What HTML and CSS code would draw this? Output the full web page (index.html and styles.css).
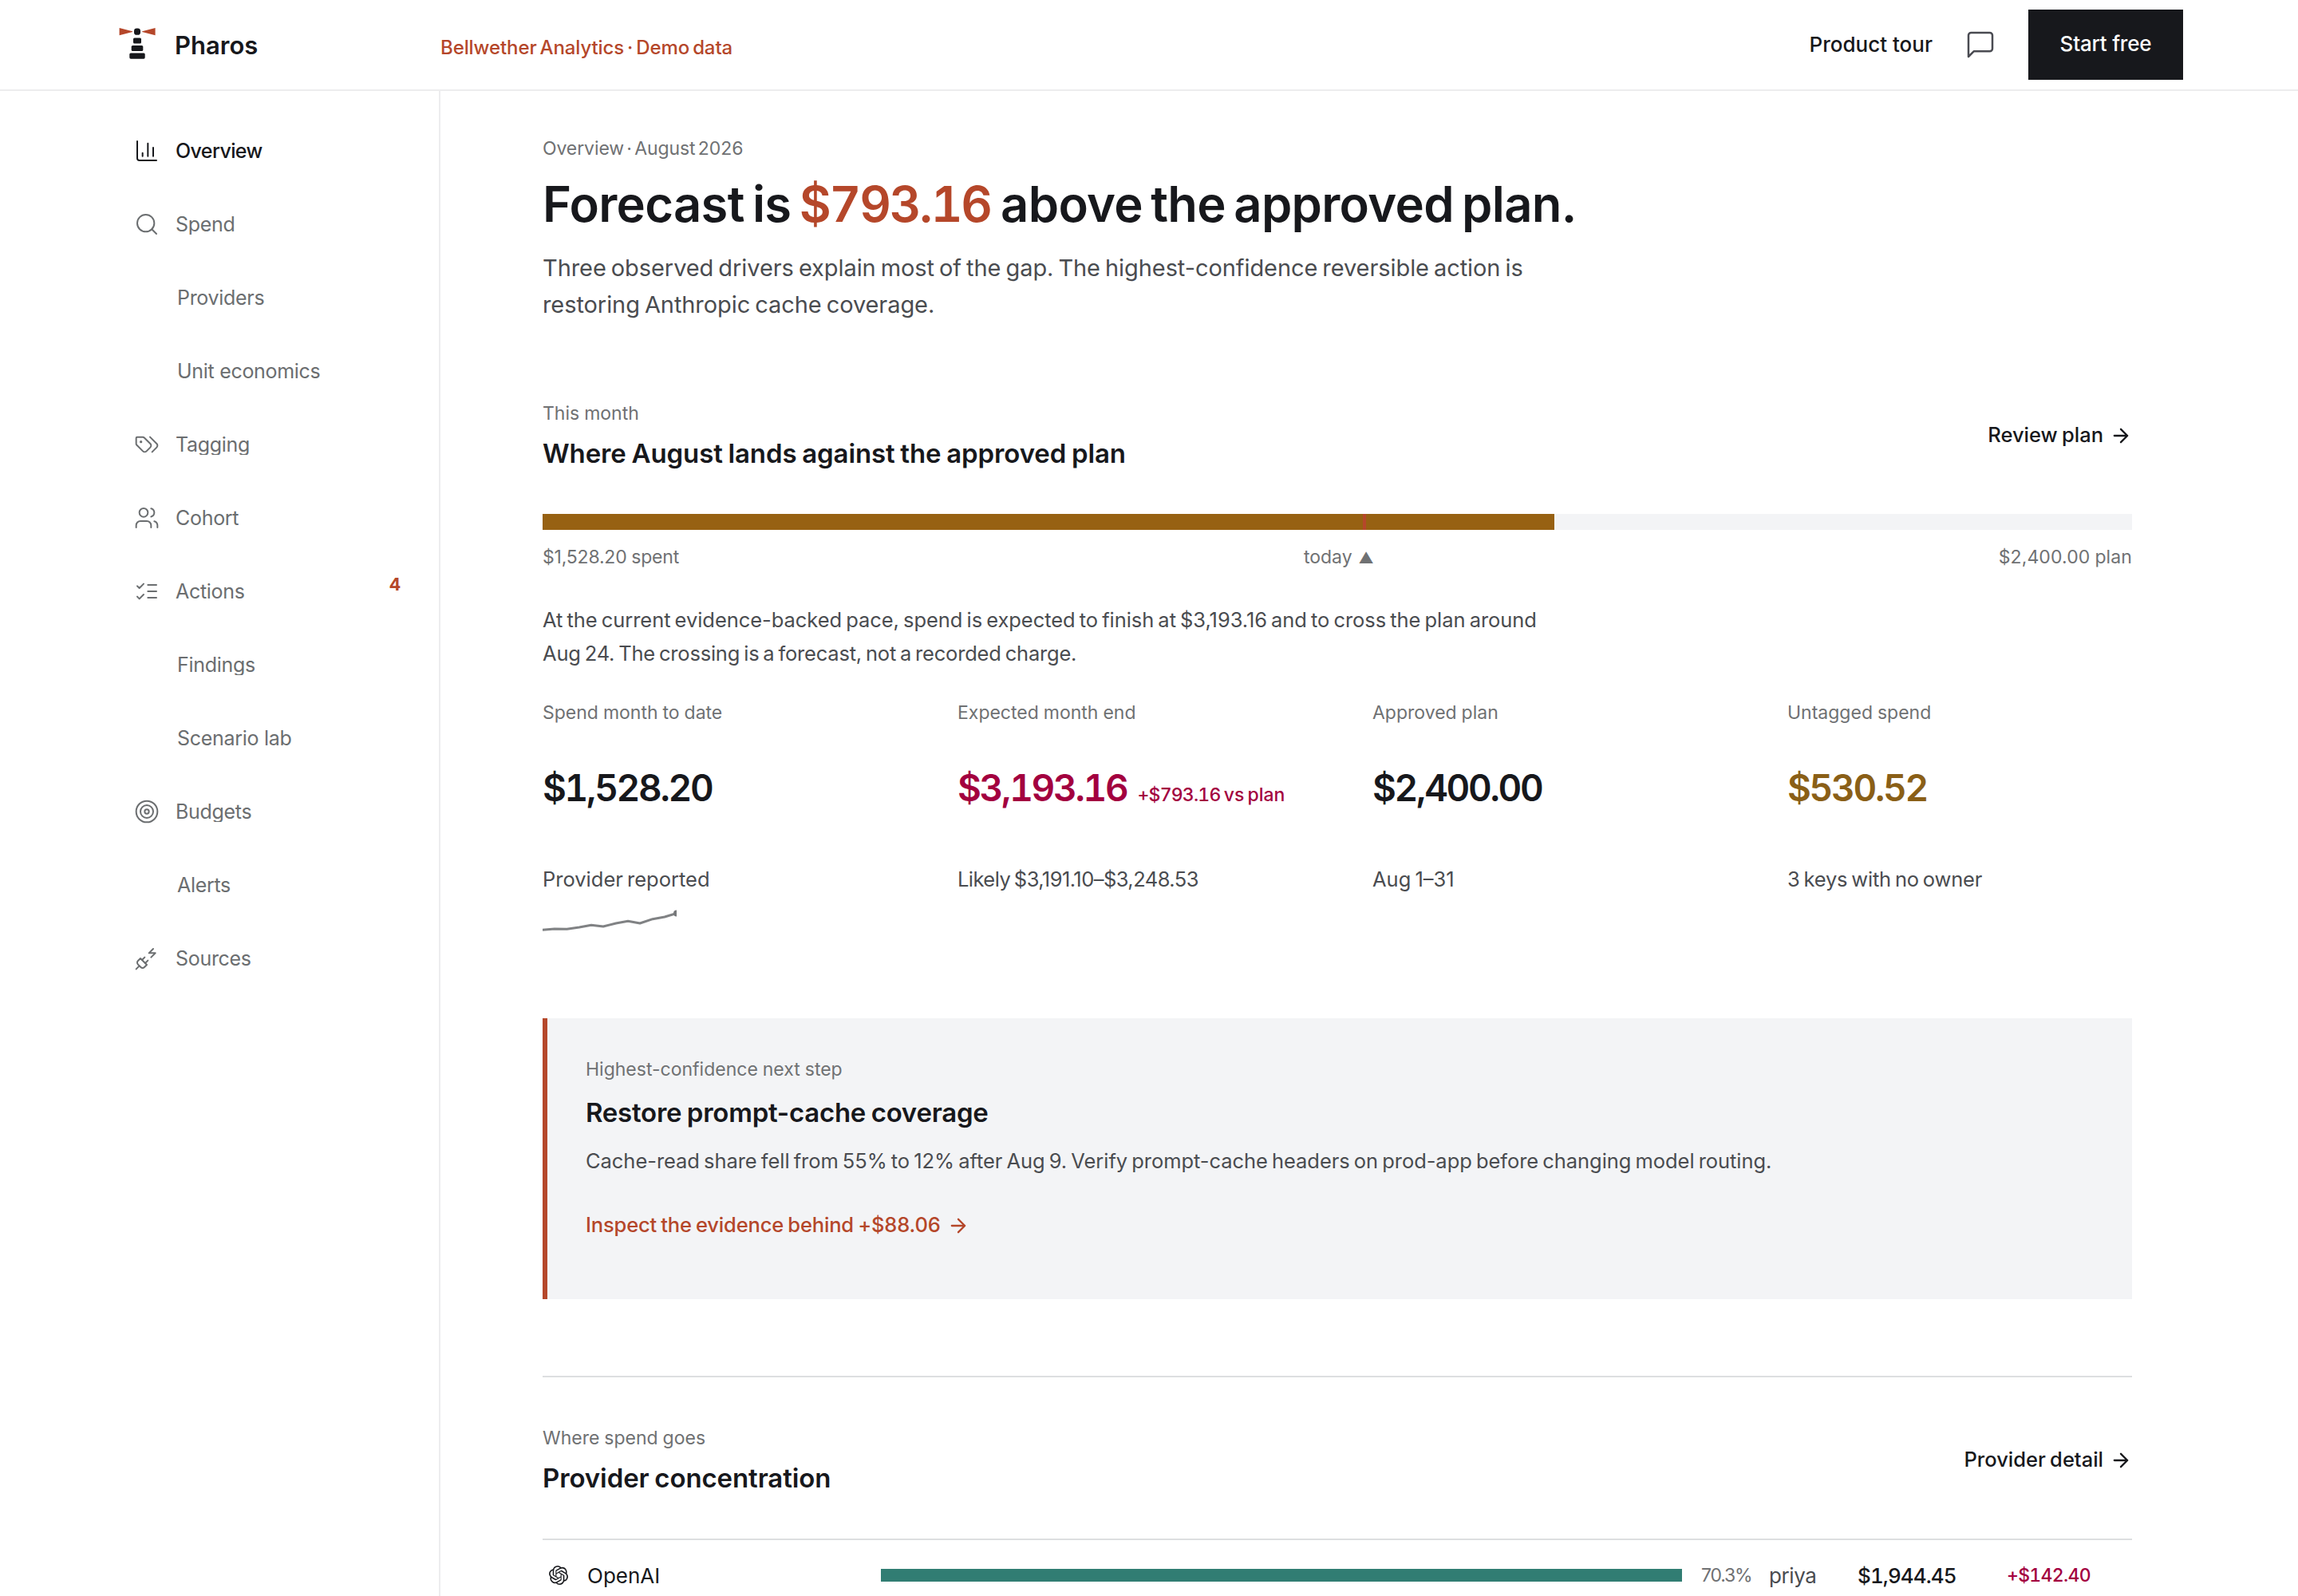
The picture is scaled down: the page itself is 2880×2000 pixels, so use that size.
FILE: index.html
```
<!DOCTYPE html>
<html lang="en">

<head>
    <meta charset="UTF-8">
    <meta name="viewport" content="width=device-width, initial-scale=1.0">
    <title>Pharos</title>
    <link rel="stylesheet" href="styles.css">
</head>

<body>
    <header class="header">
        <div class="brand">
            <svg class="logo" width="48" height="48" viewBox="0 0 48 48">
                <path fill="#b5472a" d="M1.6 7v9.2L18 12V11.200z M46.600 7v9.200L30.200 12V11.200z" />
                <g fill="#17181c">
                    <rect x="20" y="7.500" width="8" height="8.300" rx="3.400" />
                    <rect x="19" y="19.500" width="10" height="7" rx="1.600" />
                    <rect x="16.700" y="29" width="14.600" height="7" rx="1.600" />
                    <rect x="14.300" y="38.500" width="19.400" height="7.200" rx="1.600" />
                </g>
            </svg>
            <span class="brand-name">Pharos</span>
        </div>
        <div class="workspace">Bellwether Analytics · Demo data</div>
        <div class="header-right">
            <a class="tour">Product tour</a>
            <span class="chat">
                <svg class="icon" width="40" height="40" viewBox="0 0 24 24">
                    <path d="M21 15a2 2 0 0 1-2 2H7l-4 4V5a2 2 0 0 1 2-2h14a2 2 0 0 1 2 2z" />
                </svg>
            </span>
            <a class="start">Start free</a>
        </div>
    </header>

    <div class="page">
        <nav class="sidebar">
            <a class="item active">
                <svg class="icon" width="32" height="32" viewBox="0 0 24 24">
                    <path d="M3 3v16a2 2 0 0 0 2 2h16M18 17V9M13 17V5M8 17v-3" />
                </svg>
                <span class="label">Overview</span>
            </a>
            <a class="item">
                <svg class="icon" width="32" height="32" viewBox="0 0 24 24">
                    <circle cx="11" cy="11" r="8" />
                    <path d="m21 21-4.300-4.300" />
                </svg>
                <span class="label clip">Spend</span>
            </a>
            <a class="item sub"><span class="label">Providers</span></a>
            <a class="item sub"><span class="label">Unit economics</span></a>
            <a class="item">
                <svg class="icon" width="32" height="32" viewBox="0 0 24 24">
                    <path d="m15 5 6.300 6.300a2.400 2.400 0 0 1 0 3.400L17 19" />
                    <path d="M9.586 5.586A2 2 0 0 0 8.172 5H3a1 1 0 0 0-1 1v5.172a2 2 0 0 0 .586 1.414L8.290 18.290a2.426 2.426 0 0 0 3.420 0l3.580-3.580a2.426 2.426 0 0 0 0-3.420z" />
                    <circle cx="6.500" cy="9.500" r=".5" fill="currentColor" />
                </svg>
                <span class="label clip">Tagging</span>
            </a>
            <a class="item">
                <svg class="icon" width="32" height="32" viewBox="0 0 24 24">
                    <path d="M16 21v-2a4 4 0 0 0-4-4H6a4 4 0 0 0-4 4v2" />
                    <circle cx="9" cy="7" r="4" />
                    <path d="M22 21v-2a4 4 0 0 0-3-3.870M16 3.130a4 4 0 0 1 0 7.750" />
                </svg>
                <span class="label">Cohort</span>
            </a>
            <a class="item">
                <svg class="icon" width="32" height="32" viewBox="0 0 24 24">
                    <path d="m3 17 2 2 4-4M3 7l2 2 4-4M13 6h8M13 12h8M13 18h8" />
                </svg>
                <span class="label">Actions</span>
                <span class="badge">4</span>
            </a>
            <a class="item sub"><span class="label clip">Findings</span></a>
            <a class="item sub"><span class="label">Scenario lab</span></a>
            <a class="item">
                <svg class="icon" width="32" height="32" viewBox="0 0 24 24">
                    <circle cx="12" cy="12" r="10" />
                    <circle cx="12" cy="12" r="6" />
                    <circle cx="12" cy="12" r="2" />
                </svg>
                <span class="label clip">Budgets</span>
            </a>
            <a class="item sub"><span class="label">Alerts</span></a>
            <a class="item">
                <svg class="icon" width="32" height="32" viewBox="0 0 24 24">
                    <path d="M6.300 20.300a2.400 2.400 0 0 0 3.400 0L12 18l-6-6-2.300 2.300a2.400 2.400 0 0 0 0 3.400Z" />
                    <path d="m2 22 3-3M7.500 13.500 10 11M10.500 16.500 13 14M18 3l-4 4h6l-4 4" />
                </svg>
                <span class="label">Sources</span>
            </a>
        </nav>

        <main class="main">
            <div class="small crumb">Overview · August 2026</div>
            <h1>Forecast is <span class="over">$793.16</span> above the approved plan.</h1>
            <p class="lead">Three observed drivers explain most of the gap. The highest-confidence reversible action is<br>restoring Anthropic cache coverage.</p>

            <section class="month">
                <div class="section-head">
                    <div>
                        <div class="small">This month</div>
                        <h2>Where August lands against the approved plan</h2>
                    </div>
                    <a class="more"><span>Review plan</span>
                        <svg class="icon arrow" width="28" height="28" viewBox="0 0 24 24">
                            <path d="M5 12h14M12 5l7 7-7 7" />
                        </svg>
                    </a>
                </div>
                <div class="bar">
                    <div class="bar-fill" style="width: 63.675%"></div>
                    <div class="bar-today" style="left: 51.61%"></div>
                </div>
                <div class="bar-labels small">
                    <span class="spent">$1,528.20 spent</span>
                    <span>today <span class="tri">▲</span></span>
                    <span class="plan">$2,400.00 plan</span>
                </div>
                <p class="text">At the current evidence-backed pace, spend is expected to finish at $3,193.16 and to cross the plan around<br><span class="tight">Aug 24. The crossing is a forecast, not a recorded charge.</span></p>

                <div class="metrics">
                    <div class="metric">
                        <div class="small">Spend month to date</div>
                        <div class="value">$1,528.20</div>
                        <div class="note">Provider reported</div>
                        <svg class="spark" width="168" height="32" viewBox="0 0 168 32">
                            <polyline points="0,26.300 15,25 30.500,25.300 46,23 61,20.300 76,22 92,18 107,15.300 122,18 138,12.700 153,10 168,5.500" />
                            <circle cx="168" cy="5.500" r="4" />
                        </svg>
                    </div>
                    <div class="metric">
                        <div class="small">Expected month end</div>
                        <div class="value bad">$3,193.16<span class="delta"><span class="num">+$793.16</span> vs plan</span></div>
                        <div class="note range">Likely $3,191.10–$3,248.53</div>
                    </div>
                    <div class="metric">
                        <div class="small">Approved plan</div>
                        <div class="value">$2,400.00</div>
                        <div class="note">Aug 1–31</div>
                    </div>
                    <div class="metric">
                        <div class="small">Untagged spend</div>
                        <div class="value warn">$530.52</div>
                        <div class="note tight">3 keys with no owner</div>
                    </div>
                </div>
            </section>

            <section class="next">
                <div class="small">Highest-confidence next step</div>
                <h2>Restore prompt-cache coverage</h2>
                <p class="text">Cache-read share fell from 55% to 12% after Aug 9. Verify prompt-cache headers on prod-app before changing model routing.</p>
                <a class="more evidence"><span>Inspect the evidence behind +$88.06</span>
                    <svg class="icon arrow" width="28" height="28" viewBox="0 0 24 24">
                        <path d="M5 12h14M12 5l7 7-7 7" />
                    </svg>
                </a>
            </section>

            <section class="providers">
                <div class="section-head">
                    <div>
                        <div class="small">Where spend goes</div>
                        <h2>Provider concentration</h2>
                    </div>
                    <a class="more"><span>Provider detail</span>
                        <svg class="icon arrow" width="28" height="28" viewBox="0 0 24 24">
                            <path d="M5 12h14M12 5l7 7-7 7" />
                        </svg>
                    </a>
                </div>
                <div class="row">
                    <div class="provider">
                        <svg width="24" height="24" viewBox="0 0 24 24">
                            <path d="M22.2819 9.8211a5.9847 5.9847 0 0 0-.5157-4.9108 6.0462 6.0462 0 0 0-6.5098-2.9A6.0651 6.0651 0 0 0 4.9807 4.1818a5.9847 5.9847 0 0 0-3.9977 2.9 6.0462 6.0462 0 0 0 .7427 7.0966 5.98 5.98 0 0 0 .511 4.9107 6.051 6.051 0 0 0 6.5146 2.9001A5.9847 5.9847 0 0 0 13.2599 24a6.0557 6.0557 0 0 0 5.7718-4.2058 5.9894 5.9894 0 0 0 3.9977-2.9001 6.0557 6.0557 0 0 0-.7475-7.0729zm-9.022 12.6081a4.4755 4.4755 0 0 1-2.8764-1.0408l.1419-.0804 4.7783-2.7582a.7948.7948 0 0 0 .3927-.6813v-6.7369l2.02 1.1686a.071.071 0 0 1 .038.052v5.5826a4.504 4.504 0 0 1-4.4945 4.4944zm-9.6607-4.1254a4.4708 4.4708 0 0 1-.5346-3.0137l.142.0852 4.783 2.7582a.7712.7712 0 0 0 .7806 0l5.8428-3.3685v2.3324a.0804.0804 0 0 1-.0332.0615L9.74 19.9502a4.4992 4.4992 0 0 1-6.1408-1.6464zM2.3408 7.8956a4.485 4.485 0 0 1 2.3655-1.9728V11.6a.7664.7664 0 0 0 .3879.6765l5.8144 3.3543-2.0201 1.1685a.0757.0757 0 0 1-.071 0l-4.8303-2.7865A4.504 4.504 0 0 1 2.3408 7.872zm16.5963 3.8558L13.1038 8.364 15.1192 7.2a.0757.0757 0 0 1 .071 0l4.8303 2.7913a4.4944 4.4944 0 0 1-.6765 8.1042v-5.6772a.79.79 0 0 0-.407-.667zm2.0107-3.0231l-.142-.0852-4.7735-2.7818a.7759.7759 0 0 0-.7854 0L9.409 9.2297V6.8974a.0662.0662 0 0 1 .0284-.0615l4.8303-2.7866a4.4992 4.4992 0 0 1 6.6802 4.66zM8.3065 12.863l-2.02-1.1638a.0804.0804 0 0 1-.038-.0567V6.0742a4.4992 4.4992 0 0 1 7.3757-3.4537l-.142.0805L8.704 5.459a.7948.7948 0 0 0-.3927.6813zm1.0976-2.3654l2.602-1.4998 2.6069 1.4998v2.9994l-2.5974 1.4997-2.6067-1.4997Z" />
                        </svg>
                        <span>OpenAI</span>
                    </div>
                    <div class="share"></div>
                    <div class="pct">70.3%</div>
                    <div class="owner">priya</div>
                    <div class="cost">$1,944.45</div>
                    <div class="change">+$142.40</div>
                </div>
            </section>
        </main>
    </div>
</body>

</html>
```
FILE: styles.css
```
* {
    box-sizing: border-box;
}

body {
    margin: 0;
    height: 2000px;
    overflow: hidden;
    background: #fff;
    color: #17181c;
    font-family: Inter, "Liberation Sans", sans-serif;
}

h1, h2, p {
    margin: 0;
}

.icon {
    flex: none;
    fill: none;
    stroke: currentColor;
    stroke-width: 1.5;
    stroke-linecap: round;
    stroke-linejoin: round;
}

/* header */
.header {
    display: flex;
    align-items: center;
    height: 114px;
    padding: 0 144px;
    border-bottom: 2px solid #ededee;
}

.brand {
    display: flex;
    align-items: center;
    flex: none;
    width: 408px;
    padding-left: 4px;
    gap: 23px;
}

.logo {
    margin-bottom: 8px;
}

.brand-name {
    padding-top: 1px;
    font-size: 31px;
    font-weight: 600;
}

.workspace {
    padding-top: 7px;
    color: #b5472a;
    font-size: 24px;
    font-weight: 500;
    letter-spacing: -0.1px;
    word-spacing: -2.3px;
}

.header-right {
    display: flex;
    align-items: center;
    gap: 16px;
    margin-left: auto;
}

.tour,
.start {
    font-size: 26px;
    font-weight: 500;
}

.tour {
    padding-bottom: 2px;
}

.chat {
    display: flex;
    align-items: center;
    justify-content: center;
    width: 88px;
    height: 88px;
    color: #4a4b52;
}

.start {
    width: 194px;
    height: 88px;
    background: #17181c;
    color: #fff;
    line-height: 86px;
    text-align: center;
    letter-spacing: -0.2px;
}

/* sidebar */
.page {
    display: flex;
    height: 1886px;
}

.sidebar {
    display: flex;
    flex-direction: column;
    flex: none;
    gap: 4px;
    width: 552px;
    padding: 31px 48px 0 168px;
    border-right: 2px solid #ededee;
}

.item {
    display: flex;
    align-items: center;
    flex: none;
    gap: 20px;
    height: 88px;
    color: #6b6e70;
    font-size: 25px;
    letter-spacing: -0.3px;
}

.item.active {
    color: #17181c;
    font-weight: 500;
    letter-spacing: -0.6px;
}

.item.sub {
    padding-left: 54px;
}

.label {
    line-height: 26px;
}

.clip {
    overflow: hidden;
}

.badge {
    margin-left: auto;
    padding-bottom: 18px;
    color: #b5472a;
    font-size: 22px;
    font-weight: 700;
}

/* main column */
.main {
    width: 2120px;
    padding: 56px 0 0 128px;
    overflow: hidden;
}

.small {
    color: #6f7173;
    font-size: 23px;
    line-height: 32px;
    word-spacing: -0.5px;
}

.crumb {
    letter-spacing: -0.1px;
    word-spacing: -3px;
}

h1 {
    margin-top: 18px;
    font-size: 61.5px;
    font-weight: 600;
    line-height: 72px;
    letter-spacing: -0.7px;
    word-spacing: -4.5px;
}

.over {
    margin-right: 2px;
    color: #b5472a;
    letter-spacing: -2.2px;
    font-variant-numeric: tabular-nums;
}

.lead {
    margin-top: 21px;
    color: #4a4c50;
    font-size: 29px;
    line-height: 46px;
    letter-spacing: -0.08px;
    word-spacing: -2px;
}

.month {
    margin-top: 97px;
}

.section-head {
    display: flex;
    align-items: center;
    justify-content: space-between;
    margin-bottom: 54px;
}

h2 {
    margin-top: 12px;
    font-size: 33px;
    font-weight: 600;
    line-height: 44px;
    letter-spacing: -0.1px;
    word-spacing: -1.5px;
}

.more {
    display: flex;
    align-items: center;
    gap: 8px;
    font-size: 25.5px;
    font-weight: 500;
    line-height: 38px;
    word-spacing: -1.5px;
}

.more span {
    padding-bottom: 2px;
}

.arrow {
    stroke-width: 2;
}

.bar {
    position: relative;
    height: 20px;
    background: #f3f4f6;
}

.bar-fill {
    height: 20px;
    background: #976112;
}

.bar-today {
    position: absolute;
    top: 0;
    width: 4px;
    height: 20px;
    background: #b5472a;
}

.bar-labels {
    display: flex;
    justify-content: space-between;
    height: 32px;
    margin-top: 18px;
}

.spent {
    letter-spacing: -0.2px;
}

.plan {
    letter-spacing: 0.1px;
}

.tri {
    margin-left: 2px;
    font-size: 19px;
    line-height: 20px;
}

.text {
    color: #4a4c50;
    font-size: 25.5px;
    line-height: 42px;
    letter-spacing: -0.05px;
    word-spacing: -2px;
}

.tight {
    letter-spacing: -0.2px;
}

.month .text {
    margin-top: 42px;
}

.metrics {
    display: grid;
    grid-template-columns: repeat(4, 1fr);
    column-gap: 88px;
    height: 295px;
    margin-top: 37px;
}

.metric {
    white-space: nowrap;
}

.value {
    margin-top: 50px;
    font-size: 46px;
    font-weight: 600;
    line-height: 56px;
    letter-spacing: -2.3px;
    font-variant-numeric: tabular-nums;
}

.bad {
    color: #a3003f;
}

.warn {
    color: #8a5f17;
}

.delta {
    margin-left: 13px;
    font-size: 23px;
    font-weight: 500;
    line-height: 24px;
    letter-spacing: 0;
    word-spacing: -2px;
}

.num {
    letter-spacing: -0.8px;
}

.note {
    margin-top: 67px;
    color: #4a4c50;
    font-size: 25.5px;
    line-height: 40px;
    word-spacing: -2px;
}

.range {
    letter-spacing: -0.55px;
}

.spark {
    display: block;
    margin-top: 17px;
    fill: #76787a;
}

.spark polyline {
    fill: none;
    stroke: #808284;
    stroke-width: 3;
    stroke-linejoin: round;
}

.next {
    height: 352px;
    margin-top: 104px;
    padding: 48px 0 0 48px;
    border-left: 6px solid #b5472a;
    background: #f3f4f6;
}

.next h2 {
    margin-top: 16px;
    letter-spacing: -0.25px;
}

.next .text {
    margin-top: 18px;
}

.evidence {
    margin-top: 40px;
    color: #b5472a;
    letter-spacing: -0.15px;
}

/* providers */
.providers {
    margin-top: 96px;
    padding-top: 60px;
    border-top: 2px solid #dddfe0;
}

.row {
    display: grid;
    grid-template-columns: 424px 1028px 85px 111px 187px 1fr;
    align-items: center;
    height: 90px;
    border-top: 2px solid #dddfe0;
    font-size: 26px;
}

.provider {
    display: flex;
    align-items: center;
    gap: 24px;
    padding-left: 8px;
}

.provider svg {
    fill: #17181c;
}

.share {
    width: 1004px;
    height: 16px;
    background: #317d73;
}

.pct {
    color: #6f7173;
    font-size: 23px;
    letter-spacing: -1.2px;
}

.owner {
    color: #4a4c50;
    letter-spacing: -0.4px;
}

.cost {
    font-weight: 500;
    letter-spacing: -0.9px;
    font-variant-numeric: tabular-nums;
}

.change {
    color: #a3003f;
    font-size: 23px;
    font-weight: 500;
    letter-spacing: -0.7px;
    font-variant-numeric: tabular-nums;
}
```
